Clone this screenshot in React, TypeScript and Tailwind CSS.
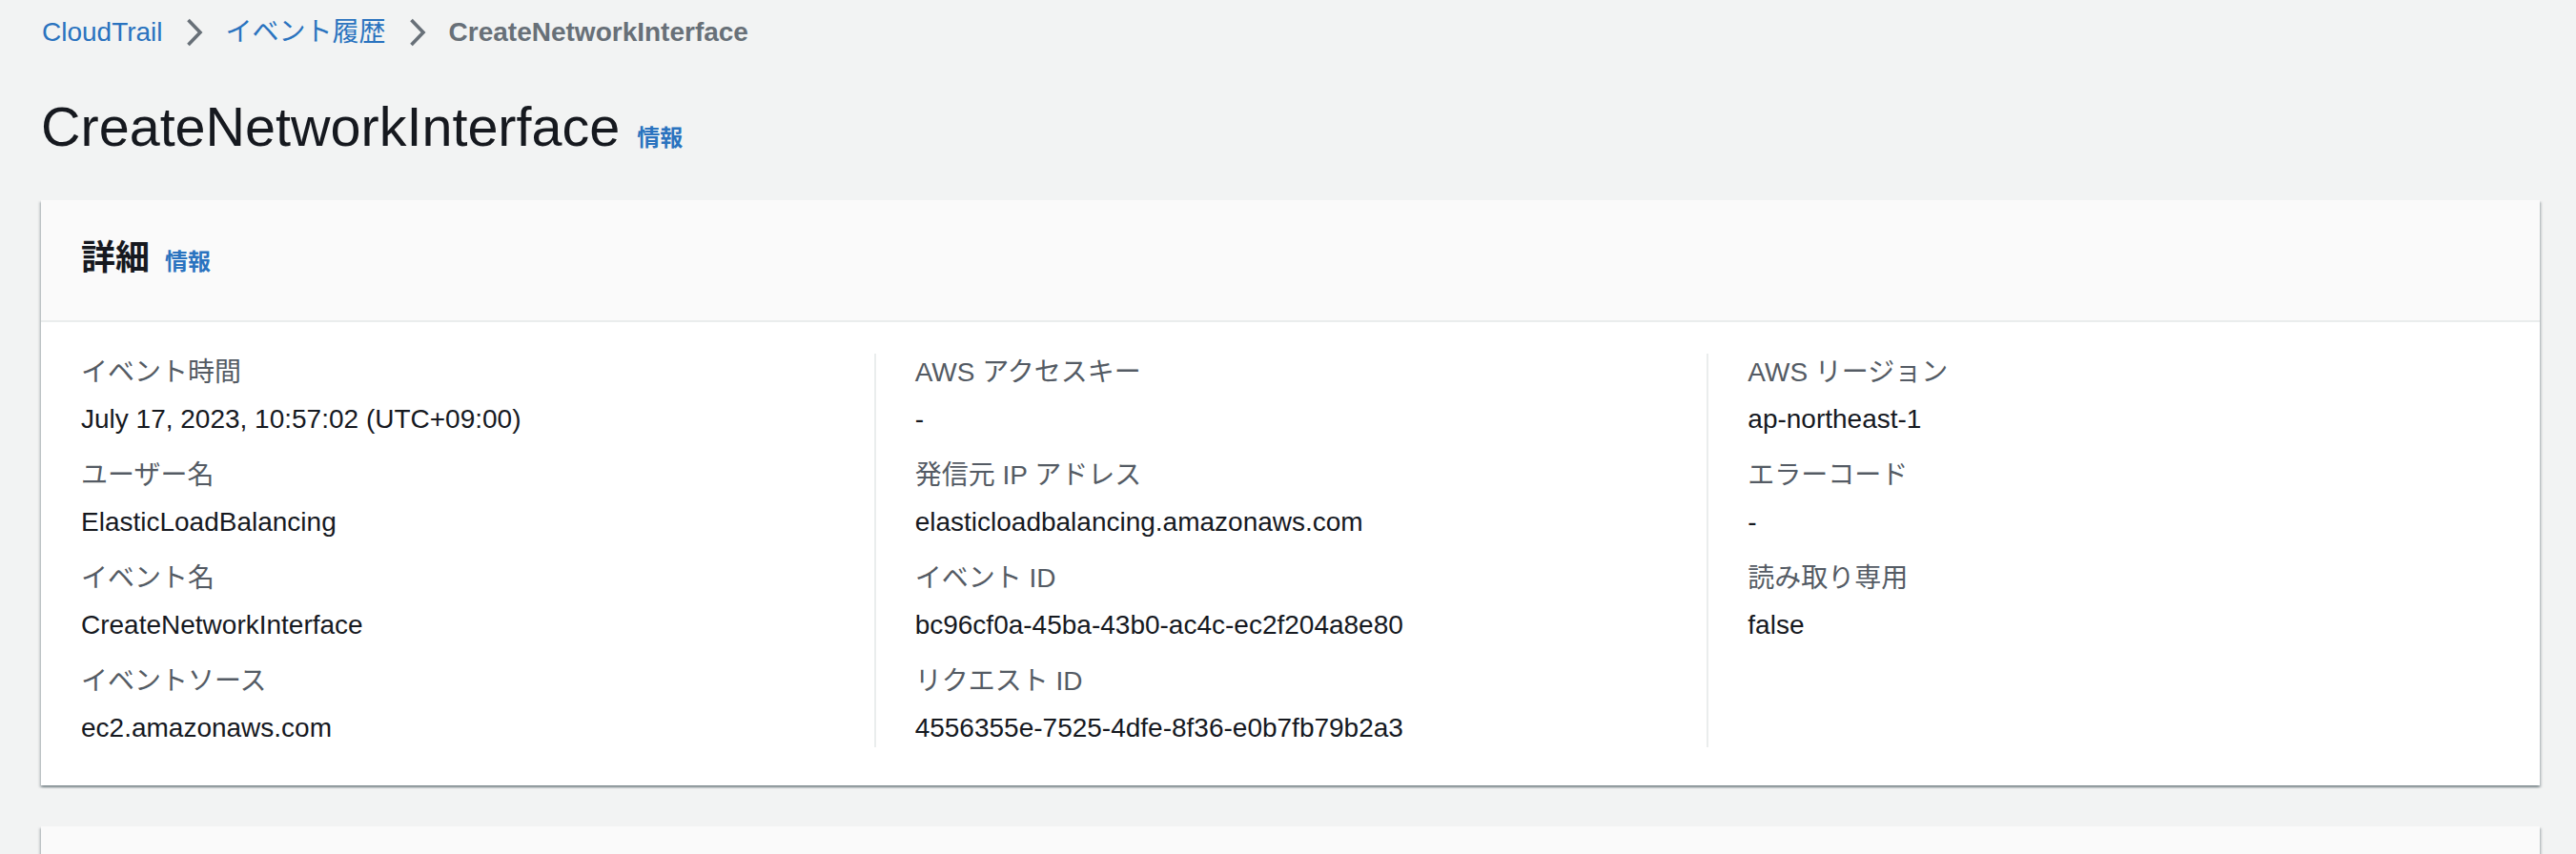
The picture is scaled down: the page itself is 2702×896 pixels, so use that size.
import React from "react";

const Chevron = () => (
  <svg width="18" height="30" viewBox="0 0 18 30" className="mx-[24px] shrink-0" aria-hidden="true">
    <path d="M2.5 2 L15 15 L2.5 28" fill="none" stroke="#687078" strokeWidth="3.6" strokeLinejoin="miter" />
  </svg>
);

type Item = { label: string; value: string };

const columns: Item[][] = [
  [
    { label: "イベント時間", value: "July 17, 2023, 10:57:02 (UTC+09:00)" },
    { label: "ユーザー名", value: "ElasticLoadBalancing" },
    { label: "イベント名", value: "CreateNetworkInterface" },
    { label: "イベントソース", value: "ec2.amazonaws.com" },
  ],
  [
    { label: "AWS アクセスキー", value: "-" },
    { label: "発信元 IP アドレス", value: "elasticloadbalancing.amazonaws.com" },
    { label: "イベント ID", value: "bc96cf0a-45ba-43b0-ac4c-ec2f204a8e80" },
    { label: "リクエスト ID", value: "4556355e-7525-4dfe-8f36-e0b7fb79b2a3" },
  ],
  [
    { label: "AWS リージョン", value: "ap-northeast-1" },
    { label: "エラーコード", value: "-" },
    { label: "読み取り専用", value: "false" },
  ],
];

const KV = ({ item }: { item: Item }) => (
  <div className="flex flex-col">
    <div className="text-[28px] leading-[40px] text-[#545b64] mb-[9px]">{item.label}</div>
    <div className="text-[28px] leading-[40px] text-[#16191f]">{item.value}</div>
  </div>
);

export default function App() {
  return (
    <div className="h-[896px] w-[2702px] overflow-hidden bg-[#f2f3f3] pl-[43px] pr-[38px] font-['Liberation_Sans','Noto_Sans_CJK_JP',sans-serif]">
      {/* Breadcrumb */}
      <nav className="mt-[14px] flex h-[40px] items-center text-[28px] leading-[40px]">
        <span className="text-[#2a73bf] ml-[1px]">CloudTrail</span>
        <Chevron />
        <span className="text-[#2a73bf]">イベント履歴</span>
        <Chevron />
        <span className="font-bold text-[#687078]">CreateNetworkInterface</span>
      </nav>

      {/* Title */}
      <div className="mt-[43px] flex items-baseline">
        <h1 className="text-[57.5px] leading-[72px] font-normal text-[#16191f]">CreateNetworkInterface</h1>
        <span className="ml-[18px] text-[24px] font-bold text-[#2a73bf]">情報</span>
      </div>

      {/* Details card */}
      <div className="mt-[41px] bg-white shadow-[0_2px_2px_0_rgba(0,28,36,0.3),2px_2px_2px_0_rgba(0,28,36,0.15),-2px_2px_2px_0_rgba(0,28,36,0.15)]">
        <div className="flex h-[128px] items-center border-b-2 border-[#eaeded] bg-[#fafafa] px-[42px] pb-[4px]">
          <div className="flex items-baseline">
            <h2 className="text-[36px] leading-[44px] font-bold text-[#16191f]">詳細</h2>
            <span className="ml-[16px] text-[24px] font-bold text-[#2a73bf]">情報</span>
          </div>
        </div>
        <div className="grid grid-cols-3 pt-[33px] pb-[40px]">
          {columns.map((col, i) => (
            <div
              key={i}
              className={
                i === 0
                  ? "flex flex-col gap-[19px] pl-[42px]"
                  : "flex flex-col gap-[19px] border-l-2 border-[#eaeded] pl-[41px]"
              }
            >
              {col.map((item) => (
                <KV key={item.label} item={item} />
              ))}
            </div>
          ))}
        </div>
      </div>

      {/* Next card (partially visible) */}
      <div className="mt-[43px] h-[128px] bg-[#fafafa] shadow-[0_2px_2px_0_rgba(0,28,36,0.3),2px_2px_2px_0_rgba(0,28,36,0.15),-2px_2px_2px_0_rgba(0,28,36,0.15)]" />
    </div>
  );
}
